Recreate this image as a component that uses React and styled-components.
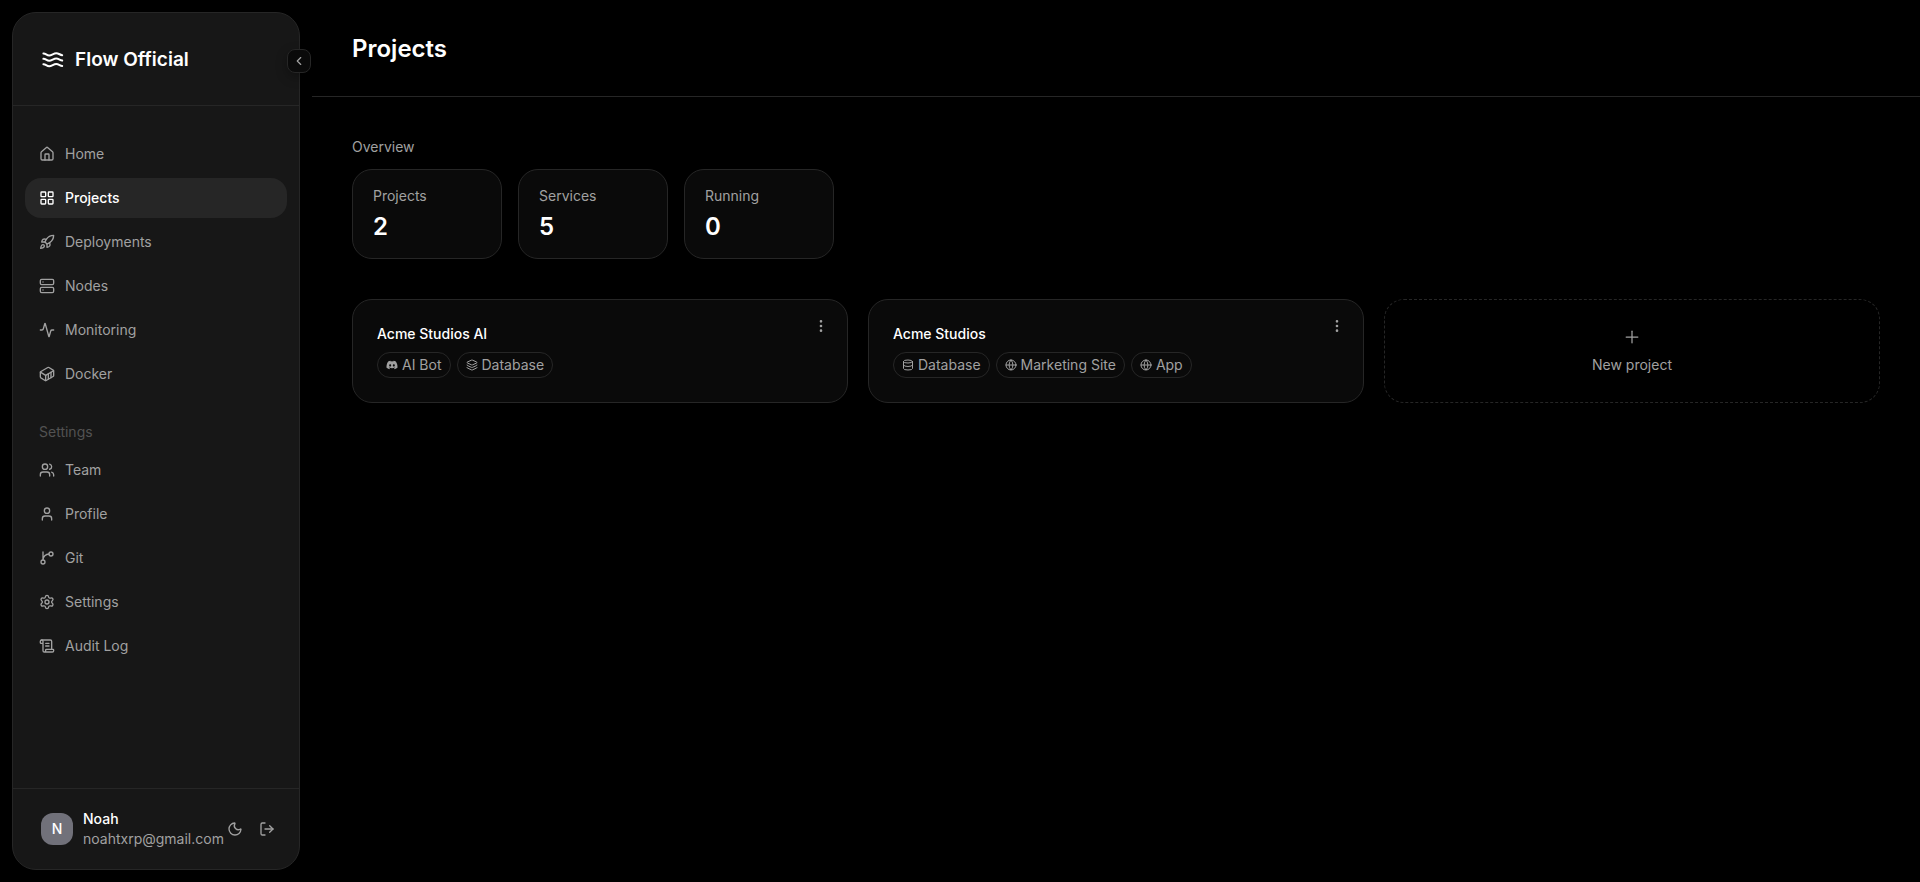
import { useState } from 'react'
import styled, { createGlobalStyle } from 'styled-components'
import {
    House, LayoutGrid, Rocket, Server, Activity, Container, Users, User,
    Settings, ScrollText, Moon, LogOut, ChevronLeft, EllipsisVertical,
    Database, Globe, Layers, Plus
} from 'lucide-react'
import { FaDiscord } from 'react-icons/fa'


const mainLinks = [
    { name: 'Home', icon: House },
    { name: 'Projects', icon: LayoutGrid },
    { name: 'Deployments', icon: Rocket },
    { name: 'Nodes', icon: Server },
    { name: 'Monitoring', icon: Activity },
    { name: 'Docker', icon: Container },
]

const settingLinks = [
    { name: 'Team', icon: Users },
    { name: 'Profile', icon: User },
    { name: 'Git', icon: BranchIcon },
    { name: 'Settings', icon: Settings },
    { name: 'Audit Log', icon: ScrollText },
]

const stats = [
    { name: 'Projects', value: 2 },
    { name: 'Services', value: 5 },
    { name: 'Running', value: 0 },
]

const projects = [
    {
        name: 'Acme Studios AI',
        services: [
            { name: 'AI Bot', icon: FaDiscord },
            { name: 'Database', icon: Layers },
        ],
    },
    {
        name: 'Acme Studios',
        services: [
            { name: 'Database', icon: Database },
            { name: 'Marketing Site', icon: Globe },
            { name: 'App', icon: Globe },
        ],
    },
]


export default function App() {

    const [page, setPage] = useState('Projects')

    return (
        <>
            <GlobalStyle />
            <Layout>
                <Sidebar page={page} setPage={setPage} />
                <Main>
                    <PageHeader>
                        <PageTitle>Projects</PageTitle>
                    </PageHeader>
                    <Content>
                        <section>
                            <SectionName>Overview</SectionName>
                            <Stats>
                                {stats.map((s) => (
                                    <Stat key={s.name}>
                                        <StatName>{s.name}</StatName>
                                        <StatValue>{s.value}</StatValue>
                                    </Stat>
                                ))}
                            </Stats>
                        </section>
                        <ProjectGrid>
                            {projects.map((p) => <ProjectCard key={p.name} project={p} />)}
                            <NewProject type="button">
                                <Plus size={20} strokeWidth={1.5} />
                                New project
                            </NewProject>
                        </ProjectGrid>
                    </Content>
                </Main>
            </Layout>
        </>
    )
}

function Sidebar({ page, setPage }) {

    const drawLink = (link) => (
        <NavLink
            key={link.name}
            href="#"
            $active={page === link.name}
            onClick={(e) => {
                e.preventDefault()
                setPage(link.name)
            }}
        >
            <link.icon size={16} />
            {link.name}
        </NavLink>
    )

    return (
        <Side>
            <Brand>
                <FlowLogo />
                Flow Official
            </Brand>
            <Collapse type="button" aria-label="Collapse sidebar">
                <ChevronLeft size={14} />
            </Collapse>
            <Nav>
                {mainLinks.map(drawLink)}
                <NavGroup>Settings</NavGroup>
                {settingLinks.map(drawLink)}
            </Nav>
            <UserBar>
                <Avatar>N</Avatar>
                <UserInfo>
                    <UserName>Noah</UserName>
                    <UserMail>noahtxrp@gmail.com</UserMail>
                </UserInfo>
                <IconButton type="button" aria-label="Change theme">
                    <Moon size={16} />
                </IconButton>
                <IconButton type="button" aria-label="Log out">
                    <LogOut size={16} />
                </IconButton>
            </UserBar>
        </Side>
    )
}

function FlowLogo() {
    return (
        <svg width="24" height="24" viewBox="0 0 24 24" fill="none" stroke="currentColor" strokeWidth="2" strokeLinecap="round" aria-hidden="true">
            <path d="M2.4 5.4C4.6 5.2 5.6 7.4 8.2 7.4S12.6 5.2 15.2 5.2S19 7 21.2 7.2" />
            <path d="M2.4 10.8C4.6 10.6 5.6 12.8 8.2 12.8S12.6 10.6 15.2 10.6S19 12.4 21.2 12.6" />
            <path d="M2.4 16.2C4.6 16 5.6 18.2 8.2 18.2S12.6 16 15.2 16S19 17.8 21.2 18" />
        </svg>
    )
}

function BranchIcon({ size }) {
    return (
        <svg width={size} height={size} viewBox="0 0 24 24" fill="none" stroke="currentColor" strokeWidth="2" strokeLinecap="round" strokeLinejoin="round" aria-hidden="true">
            <path d="M15 6a9 9 0 0 0-9 9V3" />
            <circle cx="18" cy="6" r="3" />
            <circle cx="6" cy="18" r="3" />
        </svg>
    )
}

function ProjectCard({ project }) {
    return (
        <Card>
            <CardTitle>{project.name}</CardTitle>
            <Tags>
                {project.services.map((s) => (
                    <Tag key={s.name}>
                        <s.icon size={12} />
                        {s.name}
                    </Tag>
                ))}
            </Tags>
            <CardMenu type="button" aria-label="Project menu">
                <EllipsisVertical size={16} />
            </CardMenu>
        </Card>
    )
}


const GlobalStyle = createGlobalStyle`
    * {
        box-sizing: border-box;
    }

    body {
        margin: 0;
        background-color: #000;
        color: #fff;
        font-family: Inter, "Liberation Sans", sans-serif;
        font-size: 14px;
        line-height: 20px;
        -webkit-font-smoothing: antialiased;
    }

    button {
        padding: 0;
        border: 0;
        background: none;
        color: inherit;
        font: inherit;
        cursor: pointer;
    }

    svg {
        flex-shrink: 0;
    }
`

const Layout = styled.div`
    display: flex;
    min-height: 100vh;
`

const Side = styled.aside`
    position: relative;
    display: flex;
    flex-direction: column;
    flex-shrink: 0;
    width: 288px;
    margin: 12px;
    border: 1px solid #262626;
    border-radius: 24px;
    background-color: #171717;
`

const Brand = styled.div`
    display: flex;
    align-items: center;
    gap: 10px;
    padding: 33px 28px 31px;
    border-bottom: 1px solid #262626;
    font-size: 19px;
    font-weight: 600;
    line-height: 28px;
`

const Collapse = styled.button`
    position: absolute;
    top: 36px;
    right: -12px;
    display: flex;
    align-items: center;
    justify-content: center;
    width: 24px;
    height: 24px;
    border: 1px solid #262626;
    border-radius: 8px;
    background-color: #0a0a0a;
    color: #a1a1a1;
    box-shadow: 0 4px 12px rgba(0, 0, 0, 0.3);
`

const Nav = styled.nav`
    display: flex;
    flex-direction: column;
    flex: 1;
    gap: 4px;
    padding: 28px 12px;
`

const NavLink = styled.a`
    display: flex;
    align-items: center;
    gap: 10px;
    height: 40px;
    padding: 0 14px;
    border-radius: 16px;
    background-color: ${(props) => (props.$active ? '#262626' : 'transparent')};
    color: ${(props) => (props.$active ? '#fff' : '#a1a1a1')};
    font-weight: ${(props) => (props.$active ? 500 : 400)};
    text-decoration: none;
`

const NavGroup = styled.div`
    padding: 24px 14px 4px;
    color: #525252;
`

const UserBar = styled.div`
    display: flex;
    align-items: center;
    padding: 20px 16px 20px 28px;
    border-top: 1px solid #262626;
`

const Avatar = styled.div`
    display: flex;
    align-items: center;
    justify-content: center;
    flex-shrink: 0;
    width: 32px;
    height: 32px;
    margin-right: 10px;
    border-radius: 12px;
    background-color: #71717a;
    font-weight: 500;
`

const UserInfo = styled.div`
    flex: 1;
    min-width: 0;
`

const UserName = styled.div`
    font-weight: 500;
`

const UserMail = styled.div`
    color: #a1a1a1;
`

const IconButton = styled.button`
    display: flex;
    align-items: center;
    justify-content: center;
    flex-shrink: 0;
    width: 32px;
    height: 32px;
    color: #a1a1a1;
`

const Main = styled.main`
    flex: 1;
    min-width: 0;
`

const PageHeader = styled.header`
    padding: 33px 40px 31px;
    border-bottom: 1px solid #262626;
`

const PageTitle = styled.h1`
    margin: 0;
    font-size: 24px;
    font-weight: 600;
    line-height: 32px;
`

const Content = styled.div`
    display: flex;
    flex-direction: column;
    gap: 40px;
    padding: 40px;
`

const SectionName = styled.h2`
    margin: 0 0 12px;
    color: #a1a1a1;
    font-size: 14px;
    font-weight: 400;
    line-height: 20px;
`

const Stats = styled.div`
    display: flex;
    gap: 16px;
`

const Stat = styled.div`
    width: 150px;
    padding: 16px 20px;
    border: 1px solid #262626;
    border-radius: 20px;
    background-color: #0a0a0a;
`

const StatName = styled.div`
    color: #a1a1a1;
`

const StatValue = styled.div`
    margin-top: 6px;
    font-size: 24px;
    font-weight: 600;
    line-height: 30px;
`

const ProjectGrid = styled.div`
    display: grid;
    grid-template-columns: repeat(3, 1fr);
    gap: 20px;
`

const Card = styled.article`
    position: relative;
    padding: 24px;
    border: 1px solid #262626;
    border-radius: 20px;
    background-color: #0a0a0a;
`

const CardTitle = styled.h3`
    margin: 0;
    font-size: 14px;
    font-weight: 500;
    line-height: 20px;
`

const CardMenu = styled.button`
    position: absolute;
    top: 12px;
    right: 12px;
    display: flex;
    align-items: center;
    justify-content: center;
    width: 28px;
    height: 28px;
    color: #a1a1a1;
`

const Tags = styled.div`
    display: flex;
    flex-wrap: wrap;
    gap: 6px;
    margin-top: 8px;
`

const Tag = styled.span`
    display: flex;
    align-items: center;
    gap: 4px;
    padding: 2px 8px;
    border: 1px solid #262626;
    border-radius: 13px;
    color: #a1a1a1;
`

const NewProject = styled.button`
    display: flex;
    flex-direction: column;
    align-items: center;
    justify-content: center;
    gap: 8px;
    border: 1px dashed #262626;
    border-radius: 20px;
    color: #a1a1a1;
`
